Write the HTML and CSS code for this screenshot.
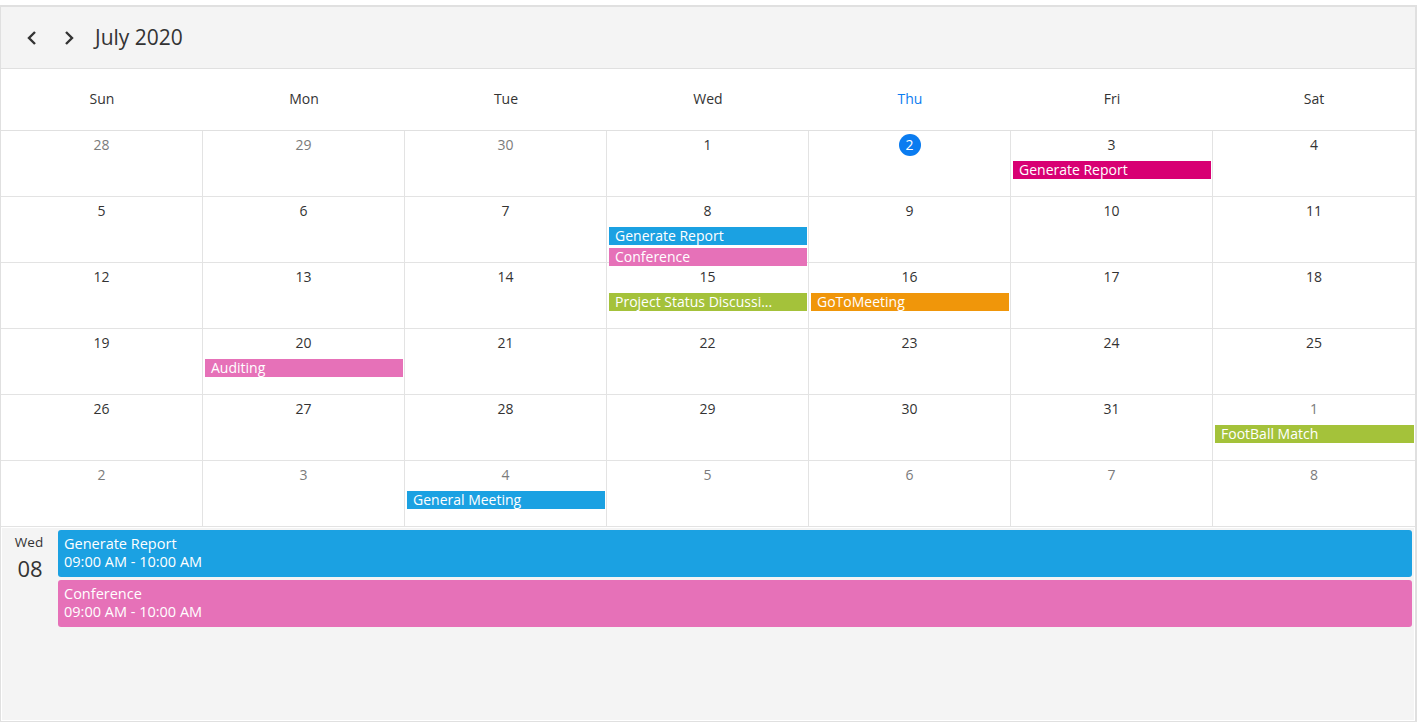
FILE: index.html
```html
<!DOCTYPE html>
<html lang="en">

<head>
    <meta charset="UTF-8">
    <meta name="viewport" content="width=device-width, initial-scale=1.0">
    <title>Scheduler - Month</title>
    <link rel="stylesheet" href="styles.css">
</head>

<body>
    <div class="scheduler">
        <div class="toolbar">
            <button class="nav-btn" aria-label="Previous">
                <svg width="12" height="16" viewBox="0 0 12 16"><path d="M9 2 L3 8 L9 14" /></svg>
            </button>
            <button class="nav-btn" aria-label="Next">
                <svg width="12" height="16" viewBox="0 0 12 16"><path d="M3 2 L9 8 L3 14" /></svg>
            </button>
            <span class="title">July 2020</span>
        </div>

        <div class="week-head">
            <div>Sun</div>
            <div>Mon</div>
            <div>Tue</div>
            <div>Wed</div>
            <div class="today-name">Thu</div>
            <div>Fri</div>
            <div>Sat</div>
        </div>

        <div class="month" id="month"></div>

        <div class="agenda">
            <div class="agenda-date">
                <div class="agenda-day">Wed</div>
                <div class="agenda-num">08</div>
            </div>
            <div class="agenda-list">
                <div class="agenda-item blue">
                    <div>Generate Report</div>
                    <div>09:00 AM - 10:00 AM</div>
                </div>
                <div class="agenda-item pink">
                    <div>Conference</div>
                    <div>09:00 AM - 10:00 AM</div>
                </div>
            </div>
        </div>
    </div>

    <script>
        // first cell is Sun 28 June
        const events = {
            "3": [["Generate Report", "magenta"]],
            "8": [["Generate Report", "blue"], ["Conference", "pink"]],
            "15": [["Project Status Discussi...", "green"]],
            "16": [["GoToMeeting", "orange"]],
            "20": [["Auditing", "pink"]],
            "n1": [["FootBall Match", "green"]],
            "n4": [["General Meeting", "blue"]]
        }

        const month = document.getElementById("month")
        let html = ""
        for (let i = 0; i < 42; i++) {
            let day, key, other = false
            if (i < 3) {
                day = 28 + i
                key = "p" + day
                other = true
            } else if (i < 34) {
                day = i - 2
                key = "" + day
            } else {
                day = i - 33
                key = "n" + day
                other = true
            }

            let cls = "cell"
            if ((i + 1) % 7 == 0) cls += " last"
            html += '<div class="' + cls + '">'
            if (key == "2") {
                html += '<div class="date"><span class="today">2</span></div>'
            } else {
                html += '<div class="date' + (other ? ' other' : '') + '">' + day + '</div>'
            }
            for (const ev of (events[key] || [])) {
                html += '<div class="event ' + ev[1] + '">' + ev[0] + '</div>'
            }
            html += '</div>'
        }
        month.innerHTML = html
    </script>
</body>

</html>
```

FILE: styles.css
```css
body {
    margin: 0;
    font-family: "Open Sans", "Noto Sans", sans-serif;
    color: #333;
    background: #fff;
}

.scheduler {
    margin-top: 5px;
    height: 714px;
    border: 1px solid #e0e0e0;
    border-top: 2px solid #e0e0e0;
    border-right: 2px solid #e0e0e0;
    display: flex;
    flex-direction: column;
}

.toolbar {
    height: 61px;
    background: #f4f4f4;
    border-bottom: 1px solid #e0e0e0;
    display: flex;
    align-items: center;
    gap: 1px;
    padding-left: 13px;
}

.nav-btn {
    background: none;
    border: none;
    width: 36px;
    height: 32px;
    padding: 0;
    display: flex;
    align-items: center;
    justify-content: center;
    cursor: pointer;
}

.nav-btn svg path {
    fill: none;
    stroke: #333;
    stroke-width: 2.4;
}

.title {
    font-size: 21px;
    margin-left: 7px;
    margin-top: -1px;
    color: #333;
}

.week-head {
    display: grid;
    grid-template-columns: repeat(7, 1fr);
    height: 61px;
    border-bottom: 1px solid #e0e0e0;
}

.week-head div {
    display: flex;
    align-items: center;
    justify-content: center;
    font-size: 14px;
    padding-bottom: 3px;
}

.week-head .today-name {
    color: #0a7cf0;
}

.month {
    display: grid;
    grid-template-columns: repeat(7, 1fr);
    grid-auto-rows: 66px;
}

.cell {
    border-right: 1px solid #e3e3e3;
    border-bottom: 1px solid #e3e3e3;
    padding-top: 3px;
    min-width: 0;
}

.cell.last {
    border-right: none;
}

.date {
    height: 22px;
    line-height: 22px;
    text-align: center;
    font-size: 14px;
    color: #333;
}

.date.other {
    color: #7b7b7b;
}

.today {
    display: inline-block;
    width: 22px;
    height: 22px;
    border-radius: 50%;
    background: #0a7cf0;
    color: #fff;
    line-height: 22px;
}

.event {
    position: relative;
    height: 18px;
    line-height: 17px;
    margin: 5px 1px 0 2px;
    padding-left: 6px;
    font-size: 14px;
    color: #fff;
    white-space: nowrap;
}

.event + .event {
    margin-top: 3px;
}

.blue { background: #1ba1e2; }
.pink { background: #e671b8; }
.magenta { background: #d80073; }
.green { background: #a4c23a; }
.orange { background: #f0960a; }

.agenda {
    flex: 1;
    background: #f4f4f4;
    border: 1px solid #fff;
    display: flex;
}

.agenda-date {
    width: 56px;
    text-align: center;
    padding-top: 5px;
}

.agenda-day {
    font-size: 13.5px;
    line-height: 18px;
    margin-left: -2px;
}

.agenda-num {
    font-size: 22px;
    line-height: 30px;
    margin-top: 2px;
}

.agenda-list {
    flex: 1;
    padding: 2px 2px 0 0;
}

.agenda-item {
    height: 47px;
    border-radius: 3px;
    color: #fff;
    font-size: 14.5px;
    line-height: 18px;
    padding: 5px 6px 0;
    box-sizing: border-box;
    margin-bottom: 3px;
}
```
